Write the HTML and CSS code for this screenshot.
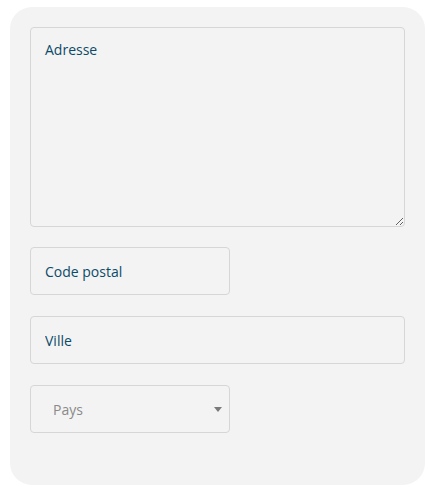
FILE: index.html
```html
<!DOCTYPE html>
<html lang="fr">
<head>
<meta charset="utf-8">
<link rel="stylesheet" href="styles.css">
</head>
<body>
<form class="card">
  <textarea class="field area" placeholder="Adresse"></textarea>
  <input class="field short" type="text" placeholder="Code postal">
  <input class="field" type="text" placeholder="Ville">
  <div class="select-wrap">
    <select class="field select">
      <option>Pays</option>
    </select>
    <span class="arrow"></span>
  </div>
</form>
</body>
</html>
```

FILE: styles.css
```css
html, body {
  margin: 0;
  background: #ffffff;
}
body {
  padding: 7px 4px 0 10px;
  font-family: "Open Sans", "Noto Sans", sans-serif;
}
.card {
  box-sizing: border-box;
  width: 415px;
  height: 478px;
  background: #f3f3f3;
  border-radius: 22px;
  padding: 20px 20px 52px 20px;
  display: flex;
  flex-direction: column;
  gap: 21px;
}
.field {
  box-sizing: border-box;
  display: block;
  width: 375px;
  height: 48px;
  margin: 0;
  border: 1px solid #d6d6d6;
  border-radius: 4px;
  background: #f3f3f3;
  font-family: "Open Sans", "Noto Sans", sans-serif;
  font-size: 14px;
  color: #0b4a68;
  padding: 0 14px;
  outline: none;
}
.field::placeholder {
  color: #0b4a68;
  opacity: 1;
}
.area {
  height: 200px;
  padding: 12px 14px;
  resize: vertical;
  margin-bottom: -1px;
}
.short {
  width: 200px;
}
.select-wrap {
  position: relative;
  width: 200px;
}
.select {
  width: 200px;
  appearance: none;
  -webkit-appearance: none;
  color: #8a8a8a;
  padding: 0 22px;
}
.arrow {
  position: absolute;
  right: 8px;
  top: 22px;
  width: 0;
  height: 0;
  border-left: 4px solid transparent;
  border-right: 4px solid transparent;
  border-top: 5px solid #7a7a7a;
}
```
